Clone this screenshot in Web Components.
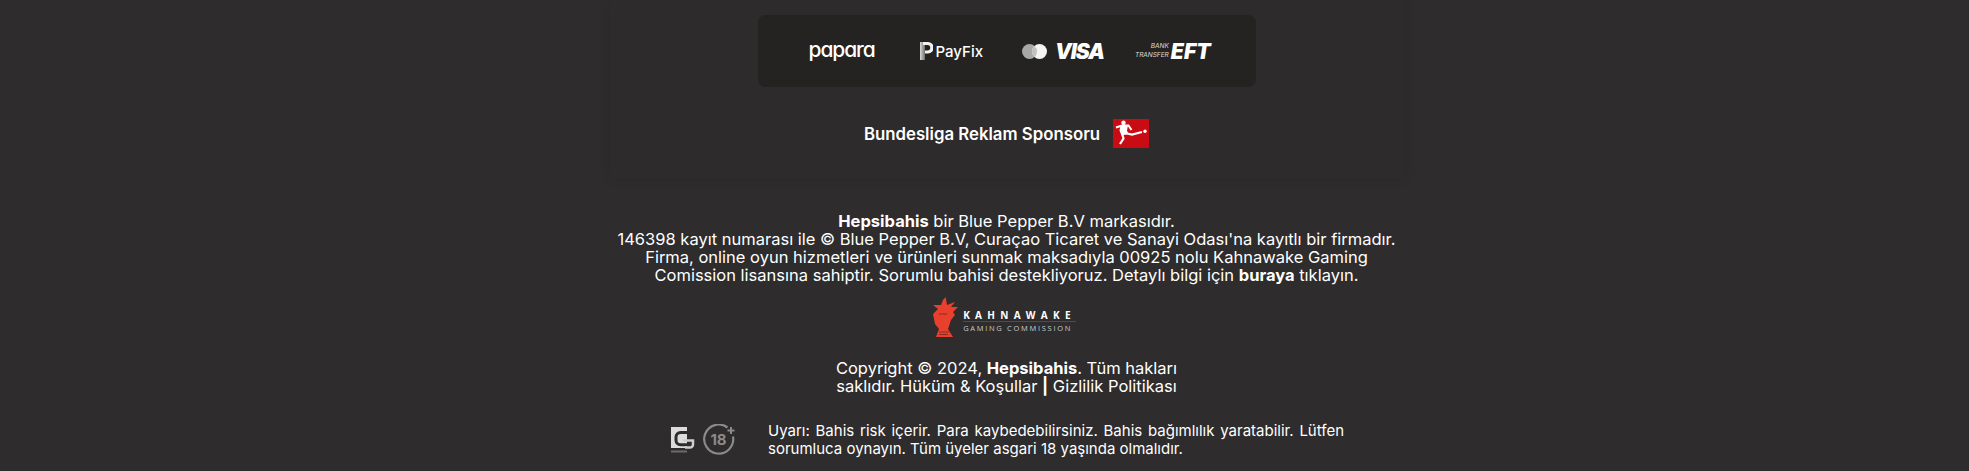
<!DOCTYPE html>
<html lang="tr">
<head>
<meta charset="utf-8">
<title>Hepsibahis</title>
<style>
    html, body { margin: 0; background: #2e2c2d; }
    body { font-family: Inter, "Liberation Sans", sans-serif; color: #fff; height: 471px; overflow: hidden; }
</style>
</head>
<body>
<site-footer>
    <sponsor-card></sponsor-card>
    <legal-text>
        <b>Hepsibahis</b> bir Blue Pepper B.V markasıdır.<br>
        146398 kayıt numarası ile © Blue Pepper B.V, Curaçao Ticaret ve Sanayi Odası'na kayıtlı bir firmadır.<br>
        Firma, online oyun hizmetleri ve ürünleri sunmak maksadıyla 00925 nolu Kahnawake Gaming<br>
        Comission lisansına sahiptir. Sorumlu bahisi destekliyoruz. Detaylı bilgi için <b>buraya</b> tıklayın.
    </legal-text>
    <kahnawake-logo></kahnawake-logo>
    <copyright-text>
        Copyright © 2024, <b>Hepsibahis</b>. Tüm hakları<br>
        saklıdır. Hüküm &amp; Koşullar <b>|</b> Gizlilik Politikası
    </copyright-text>
    <warning-row>Uyarı: Bahis risk içerir. Para kaybedebilirsiniz. Bahis bağımlılık yaratabilir. Lütfen sorumluca oynayın. Tüm üyeler asgari 18 yaşında olmalıdır.</warning-row>
</site-footer>

<script>
class SiteFooter extends HTMLElement {
    constructor() {
        super();
        this.attachShadow({ mode: 'open' });
        this.shadowRoot.innerHTML = `
            <style>
                :host {
                    display: flex;
                    flex-direction: column;
                    align-items: center;
                    padding-left: 44px;
                }
            </style>
            <slot></slot>
        `;
    }
}

class SponsorCard extends HTMLElement {
    constructor() {
        super();
        this.attachShadow({ mode: 'open' });
        this.shadowRoot.innerHTML = `
            <style>
                :host {
                    display: block;
                    box-sizing: border-box;
                    width: 794px;
                    height: 178px;
                    padding-top: 15px;
                    background: #2d2b2c;
                    box-shadow: 0 0 12px rgba(0, 0, 0, .1);
                }
                .methods {
                    box-sizing: border-box;
                    width: 498px;
                    height: 72px;
                    margin: 0 auto;
                    padding-left: 51px;
                    display: flex;
                    align-items: center;
                    background: #242321;
                    border-radius: 8px;
                }
                .papara {
                    font: 500 21px/1 Inter, sans-serif;
                    font-feature-settings: 'cv11';
                    letter-spacing: -1.100px;
                    position: relative;
                    top: -2px;
                }
                .payfix {
                    display: flex;
                    align-items: center;
                    gap: 3px;
                    margin-left: 45px;
                    font: 500 15px/1 Inter, sans-serif;
                }
                .visa {
                    display: flex;
                    align-items: center;
                    gap: 8px;
                    margin-left: 39px;
                    font: italic 900 21px/1 Inter, sans-serif;
                    letter-spacing: -1px;
                }
                .eft { display: flex; align-items: center; gap: 2px; margin-left: 31px; }
                .eft small {
                    font: italic 400 6.500px/9px Inter, sans-serif;
                    text-align: right;
                    color: #ddd;
                }
                .eft span { font: italic 900 21px/1 Inter, sans-serif; letter-spacing: 0; }
                .sponsor {
                    display: flex;
                    align-items: center;
                    justify-content: center;
                    gap: 13px;
                    margin-top: 32px;
                    font: 600 16.800px/20px Inter, sans-serif;
                }
            </style>
            <div class="methods">
                <span class="papara">papara</span>
                <span class="payfix">
                    <svg width="13" height="18" viewBox="0 0 13 18">
                        <defs><linearGradient id="stem" x1="0" x2="1" y1="0" y2="0"><stop offset="0" stop-color="#d8d8d8"/><stop offset="1" stop-color="#6f6f6f"/></linearGradient></defs>
                        <path d="M0 0h5v18H0z" fill="url(#stem)"/>
                        <path d="M3 0h5a5 5 0 0 1 0 11.500H5V8.500h2.500a2.200 2.200 0 0 0 0-5.500H3z" fill="#f2f2f2"/>
                    </svg>
                    PayFix
                </span>
                <span class="visa">
                    <svg width="25" height="15" viewBox="0 0 25 15"><circle cx="7.500" cy="7.500" r="7.500" fill="#a8a8a8"/><circle cx="17.500" cy="7.500" r="7.500" fill="#f4f4f4"/><path d="M12.500 1.900a7.500 7.500 0 0 1 0 11.200a7.500 7.500 0 0 1 0-11.200z" fill="#c2c2c2"/></svg>
                    VISA
                </span>
                <span class="eft">
                    <small>BANK<br>TRANSFER</small>
                    <span>EFT</span>
                </span>
            </div>
            <div class="sponsor">
                <span>Bundesliga Reklam Sponsoru</span>
                <svg width="36" height="29" viewBox="0 0 36 29">
                    <rect width="36" height="29" fill="#c90c14"/>
                    <circle cx="10.500" cy="3.800" r="2.200" fill="#fff"/>
                    <circle cx="32" cy="12.300" r="1.700" fill="#fff"/>
                    <path d="M3 8.500L9 6.500 15.500 6.500 18.500 11" stroke="#fff" stroke-width="2" fill="none"/>
                    <path d="M7.500 6.500l7.500 0-1 5 1.500 3.500-7 1.500-2-5z" fill="#fff"/>
                    <path d="M9 14.500l1.500 5-3.500 5.500" stroke="#fff" stroke-width="2.200" fill="none"/>
                    <path d="M12 14l7 1.500 10-2.500" stroke="#fff" stroke-width="2.200" fill="none"/>
                </svg>
            </div>
        `;
    }
}

class LegalText extends HTMLElement {
    constructor() {
        super();
        this.attachShadow({ mode: 'open' });
        this.shadowRoot.innerHTML = `
            <style>
                :host {
                    display: block;
                    margin-top: 34px;
                    font: 400 16.500px/18px Inter, sans-serif;
                    text-align: center;
                    white-space: nowrap;
                }
            </style>
            <slot></slot>
        `;
    }
}

class KahnawakeLogo extends HTMLElement {
    constructor() {
        super();
        this.attachShadow({ mode: 'open' });
        this.shadowRoot.innerHTML = `
            <style>
                :host {
                    display: flex;
                    align-items: center;
                    gap: 5px;
                    margin-top: 12px;
                    margin-right: 4px;
                    height: 42px;
                }
                .words { margin-top: 9px; color: #fff; }
                .top {
                    font: 700 10px/11px "Open Sans", sans-serif;
                    letter-spacing: 5.300px;
                    border-bottom: 1px solid #9c2a2c;
                    white-space: nowrap;
                }
                .bottom {
                    font: 400 7.500px/12px "Open Sans", sans-serif;
                    letter-spacing: 1.700px;
                    color: #c9c9c9;
                    white-space: nowrap;
                }
            </style>
            <svg width="25" height="40" viewBox="0 0 25 40">
                <path d="M12.700 0L14 8 22 5 18 10 25 10 20 15 22 18 18 23 15 32 20 40H3L6 32 2 27 0 17 5 12 0 8H8L10 3z" fill="#e8402c"/>
                <path d="M6 17h8M6 35h10M6 37.500h9" stroke="#8a2a1e" stroke-width="1.200" fill="none"/>
            </svg>
            <div class="words">
                <div class="top">KAHNAWAKE</div>
                <div class="bottom">GAMING COMMISSION</div>
            </div>
        `;
    }
}

class CopyrightText extends HTMLElement {
    constructor() {
        super();
        this.attachShadow({ mode: 'open' });
        this.shadowRoot.innerHTML = `
            <style>
                :host {
                    display: block;
                    margin-top: 21px;
                    font: 400 16.500px/18px Inter, sans-serif;
                    text-align: center;
                    white-space: nowrap;
                }
            </style>
            <slot></slot>
        `;
    }
}

class WarningRow extends HTMLElement {
    constructor() {
        super();
        this.attachShadow({ mode: 'open' });
        this.shadowRoot.innerHTML = `
            <style>
                :host {
                    display: flex;
                    align-items: center;
                    box-sizing: border-box;
                    width: 673px;
                    margin-top: 27px;
                    margin-left: 2px;
                }
                .badges { display: flex; align-items: center; gap: 8px; width: 97px; flex: none; }
                p {
                    margin: 0;
                    flex: 1;
                    font: 400 15px/18px Inter, sans-serif;
                    text-align: justify;
                }
            </style>
            <div class="badges">
                <svg width="24" height="26" viewBox="0 0 24 26">
                    <rect width="16" height="21" fill="#dcdcdc"/>
                    <path d="M16 5.400H9.500a4.500 4.500 0 0 0-4.500 4.500v3.300a4.500 4.500 0 0 0 4.500 4.500H16" stroke="#2e2c2d" stroke-width="3" fill="none"/>
                    <path d="M12 13.400h10v4a3 3 0 0 1-3 3h-5" stroke="#cfcfcf" stroke-width="2.500" fill="none"/>
                    <rect y="23.500" width="16" height="2" fill="#6c6c6c"/>
                </svg>
                <svg width="33" height="32" viewBox="0 0 33 32">
                    <path d="M24.500 3.500A14.500 14.500 0 1 0 30 12.500" stroke="#8a8a8a" stroke-width="2.200" fill="none"/>
                    <path d="M24.500 6.500h7M28 3v7" stroke="#8a8a8a" stroke-width="2"/>
                    <text x="15.500" y="21" text-anchor="middle" font-family="Inter, sans-serif" font-size="15" font-weight="700" fill="#8a8a8a">18</text>
                </svg>
            </div>
            <p><slot></slot></p>
        `;
    }
}

customElements.define('site-footer', SiteFooter);
customElements.define('sponsor-card', SponsorCard);
customElements.define('legal-text', LegalText);
customElements.define('kahnawake-logo', KahnawakeLogo);
customElements.define('copyright-text', CopyrightText);
customElements.define('warning-row', WarningRow);
</script>
</body>
</html>
